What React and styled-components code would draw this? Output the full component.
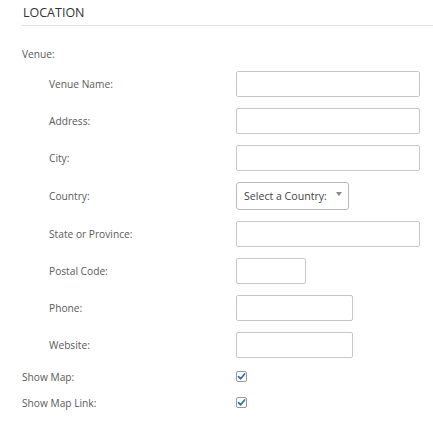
import React from "react";
import styled, { createGlobalStyle } from "styled-components";

const GlobalStyle = createGlobalStyle`
  body {
    margin: 0;
    background: #fff;
    font-family: "Open Sans", "Liberation Sans", sans-serif;
  }
`;

const Section = styled.div`
  padding-left: 22px;
  width: 411px;
`;

const Heading = styled.h3`
  margin: 0;
  height: 25px;
  line-height: 25px;
  padding-left: 1px;
  font-size: 12.5px;
  font-weight: 400;
  color: #333;
  border-bottom: 1px solid #e2e2e2;
`;

const GroupLabel = styled.div`
  margin-top: 18px;
  height: 20px;
  line-height: 20px;
  font-size: 10.2px;
  color: #5a5a5a;
`;

const Group = styled.div`
  padding-left: 27px;
  padding-top: 1.5px;
`;

const Row = styled.div`
  display: grid;
  grid-template-columns: ${(p) => p.labelWidth || 187}px 1fr;
  align-items: center;
  height: ${(p) => p.height || 37}px;
`;

const Label = styled.label`
  font-size: 10.2px;
  color: #5a5a5a;
`;

const TextInput = styled.input`
  box-sizing: border-box;
  width: ${(p) => p.width}px;
  height: 26px;
  border: 1px solid #c8c8c8;
  border-radius: 2px;
  background: #fff;
  padding: 0 6px;
  margin: 0;
  outline: none;
`;

const Select = styled.div`
  box-sizing: border-box;
  width: 113px;
  height: 28px;
  border: 1px solid #b9b9b9;
  border-radius: 3px;
  display: flex;
  align-items: center;
  justify-content: space-between;
  padding: 0 6px 0 7px;
  font-size: 10.6px;
  color: #444;
`;

const Arrow = styled.span`
  width: 0;
  height: 0;
  border-left: 3px solid transparent;
  border-right: 3px solid transparent;
  border-top: 4px solid #888;
  margin-bottom: 4px;
`;

const CheckBox = styled.span`
  box-sizing: border-box;
  width: 11px;
  height: 11px;
  border: 1px solid #999;
  border-radius: 2px;
  display: flex;
  align-items: center;
  justify-content: center;
  background: #fff;
`;

const Check = () => (
  <CheckBox>
    <svg width="9" height="9" viewBox="0 0 9 9">
      <path
        d="M1.5 4.6 L3.6 6.8 L7.6 2"
        fill="none"
        stroke="#2f6db5"
        strokeWidth="1.7"
        strokeLinecap="round"
        strokeLinejoin="round"
      />
    </svg>
  </CheckBox>
);

const fields = [
  { label: "Venue Name:", width: 184 },
  { label: "Address:", width: 184 },
  { label: "City:", width: 184 },
  { label: "Country:", select: true },
  { label: "State or Province:", width: 184 },
  { label: "Postal Code:", width: 70 },
  { label: "Phone:", width: 117 },
  { label: "Website:", width: 117 },
];

export default function App() {
  return (
    <>
      <GlobalStyle />
      <Section>
        <Heading>LOCATION</Heading>
        <GroupLabel>Venue:</GroupLabel>
        <Group>
          {fields.map((f) => (
            <Row key={f.label} height={f.select ? 39 : 37}>
              <Label>{f.label}</Label>
              {f.select ? (
                <Select>
                  <span>Select a Country:</span>
                  <Arrow />
                </Select>
              ) : (
                <TextInput type="text" width={f.width} />
              )}
            </Row>
          ))}
        </Group>
        <Row labelWidth={214} height={26}>
          <Label>Show Map:</Label>
          <Check />
        </Row>
        <Row labelWidth={214} height={26}>
          <Label>Show Map Link:</Label>
          <Check />
        </Row>
      </Section>
    </>
  );
}
